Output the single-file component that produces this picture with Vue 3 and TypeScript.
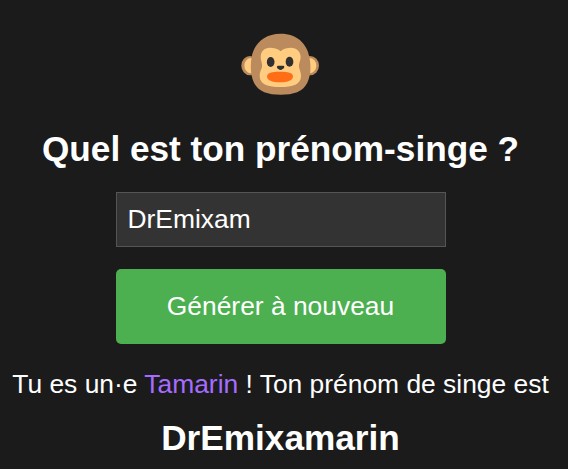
<template>
  <main class="page">
    <!-- Logo singe -->
    <svg class="logo" viewBox="33 39 237 186" aria-hidden="true">
      <ellipse cx="60" cy="137" rx="26" ry="29" fill="#bb8b5d" />
      <ellipse cx="240" cy="137" rx="27" ry="29" fill="#bb8b5d" />
      <ellipse cx="63" cy="137" rx="20" ry="23" fill="#ffcc80" />
      <ellipse cx="238" cy="137" rx="21" ry="23" fill="#ffcc80" />
      <path
        d="M152 41C102 41 72 72 65 111C60 139 62 167 72 188C85 215 115 224 152 224C190 224 219 215 232 188C242 167 244 139 238 111C231 72 202 41 152 41Z"
        fill="#bb8b5d"
      />
      <path
        d="M152 94C142 85 131 83 120 83C102 83 92 95 92 111C92 122 98 131 96 142C93 151 89 157 89 168C89 194 114 201 151 201C188 201 213 194 213 168C213 157 209 151 207 142C205 131 212 122 212 111C212 95 200 83 183 83C171 83 161 85 152 94Z"
        fill="#ffcc80"
      />
      <ellipse cx="122" cy="126" rx="11.5" ry="15" fill="#303030" />
      <ellipse cx="178.5" cy="125" rx="11.5" ry="15" fill="#303030" />
      <path
        d="M144 137H160C165 138 163 144 158 147C154 151 149 151 145 147C140 144 139 138 144 137Z"
        fill="#303030"
      />
      <path
        d="M150 155C174 155 189 158 189 169C189 181 174 187 150 187C126 187 111 181 111 169C111 158 126 155 150 155Z"
        fill="#ff6d16"
      />
    </svg>

    <h1 class="title">Quel est ton prénom-singe ?</h1>

    <form class="form" @submit.prevent="generate">
      <input v-model="firstName" class="field" type="text" aria-label="Prénom" />
      <button class="button" type="submit">Générer à nouveau</button>
    </form>

    <p class="sentence">
      Tu es un·e <span class="species">{{ species }}</span> ! Ton prénom de singe est
    </p>
    <h2 class="result">{{ monkeyName }}</h2>
  </main>
</template>

<script setup lang="ts">
import { ref } from 'vue'

/** Prénom saisi */
const firstName = ref<string>('DrEmixam')

/** Espèce attribuée */
const species = ref<string>('Tamarin')

/** Prénom-singe affiché */
const monkeyName = ref<string>('DrEmixamarin')

// Fusionne le prénom et l'espèce sur leur plus longue partie commune
function generate() {
  const name = firstName.value.trim()
  const end = species.value.slice(1)
  let overlap = end.length
  while (overlap > 0 && !name.toLowerCase().endsWith(end.slice(0, overlap))) {
    overlap--
  }
  monkeyName.value = name + end.slice(overlap)
}
</script>

<style>
body {
  margin: 0;
  background: #1b1b1b;
  overflow: hidden;
}
</style>

<style scoped>
.page {
  box-sizing: border-box;
  width: 561px;
  height: 469px;
  padding-top: 33px;
  display: flex;
  flex-direction: column;
  align-items: center;
  color: #fff;
  font-family: 'Liberation Sans', Arial, sans-serif;
  font-size: 26.4px;
}

.logo {
  width: 79px;
  height: 62px;
  flex: none;
}

.title,
.result {
  margin: 0;
  font-size: 35.2px;
  line-height: 40px;
  font-weight: 700;
  white-space: nowrap;
}

.title {
  margin-top: 34px;
}

.form {
  margin-top: 23px;
  width: 330px;
  display: flex;
  flex-direction: column;
  gap: 22px;
}

.field {
  box-sizing: border-box;
  width: 100%;
  height: 55px;
  padding: 0 11px;
  border: 1px solid #555;
  border-radius: 0;
  outline: none;
  background: #333;
  color: #fff;
  font: inherit;
}

.button {
  height: 75px;
  padding: 0;
  border: 0;
  border-radius: 5px;
  background: #4caf50;
  color: #fff;
  font: inherit;
  cursor: pointer;
}

.sentence {
  margin: 25px 0 0;
  line-height: 30px;
  white-space: nowrap;
}

.species {
  color: #a66cff;
}

.result {
  margin-top: 19px;
}
</style>
